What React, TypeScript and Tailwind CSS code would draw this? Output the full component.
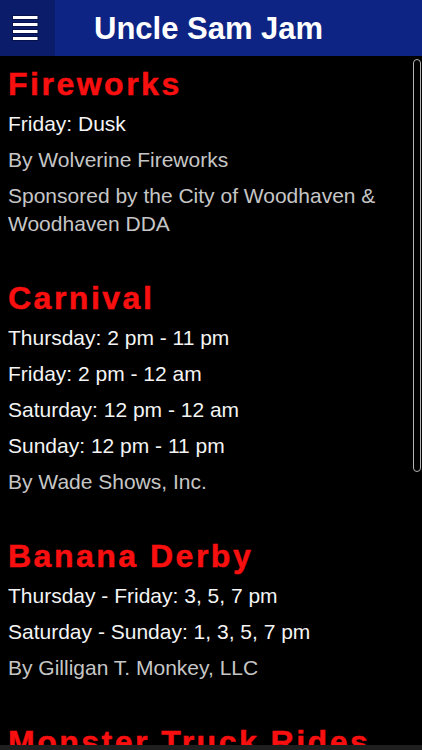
import React from "react";

type Item = { text: string; gray?: boolean };
type Section = { title: string; items: Item[] };

const sections: Section[] = [
  {
    title: "Fireworks",
    items: [
      { text: "Friday: Dusk" },
      { text: "By Wolverine Fireworks", gray: true },
      { text: "Sponsored by the City of Woodhaven & Woodhaven DDA", gray: true },
    ],
  },
  {
    title: "Carnival",
    items: [
      { text: "Thursday: 2 pm - 11 pm" },
      { text: "Friday: 2 pm - 12 am" },
      { text: "Saturday: 12 pm - 12 am" },
      { text: "Sunday: 12 pm - 11 pm" },
      { text: "By Wade Shows, Inc.", gray: true },
    ],
  },
  {
    title: "Banana Derby",
    items: [
      { text: "Thursday - Friday: 3, 5, 7 pm" },
      { text: "Saturday - Sunday: 1, 3, 5, 7 pm" },
      { text: "By Gilligan T. Monkey, LLC", gray: true },
    ],
  },
  {
    title: "Monster Truck Rides",
    items: [],
  },
];

function Hamburger() {
  return (
    <svg width="55" height="56" viewBox="0 0 55 56">
      {[15, 22, 29, 36].map((y) => (
        <rect
          key={y}
          x="12.5"
          y={y + 0.5}
          width="25.5"
          height="4"
          fill="#ffffff"
          stroke="#06104a"
          strokeWidth="1"
        />
      ))}
    </svg>
  );
}

export default function App() {
  return (
    <div
      className="relative w-[422px] h-[750px] overflow-hidden bg-black"
      style={{ fontFamily: '"Liberation Sans", Arial, sans-serif' }}
    >
      <header className="flex h-[56px] bg-[#0e2484]">
        <div className="w-[55px] h-[56px] bg-[#0b1c6b] flex items-center justify-center">
          <Hamburger />
        </div>
        <div className="pl-[39px] pt-[2px] flex items-center text-white font-bold text-[31px] leading-[56px]">
          Uncle Sam Jam
        </div>
      </header>

      <main className="px-2 pt-[10px] pr-[14px]">
        {sections.map((s, i) => (
          <section key={s.title} className={i === 0 ? "" : "mt-[42px]"}>
            <h2 className="text-[#f80f0f] font-bold text-[32px] leading-[36px] tracking-[2.5px] whitespace-nowrap [-webkit-text-stroke:0.5px_#f80f0f]">
              {s.title}
            </h2>
            {s.items.map((it) => (
              <p
                key={it.text}
                className={`mt-2 text-[21px] leading-[28px] ${
                  it.gray ? "text-[#c6c6c6]" : "text-[#f4f4f4]"
                }`}
              >
                {it.text}
              </p>
            ))}
          </section>
        ))}
      </main>

      <div className="absolute left-[413px] top-[59px] w-[8px] h-[413px] rounded-full border-[1.5px] border-[#b4b4b4] bg-black" />

      <div className="absolute left-0 right-0 bottom-0 h-[5px] bg-[#1f1f1f]" />
    </div>
  );
}
